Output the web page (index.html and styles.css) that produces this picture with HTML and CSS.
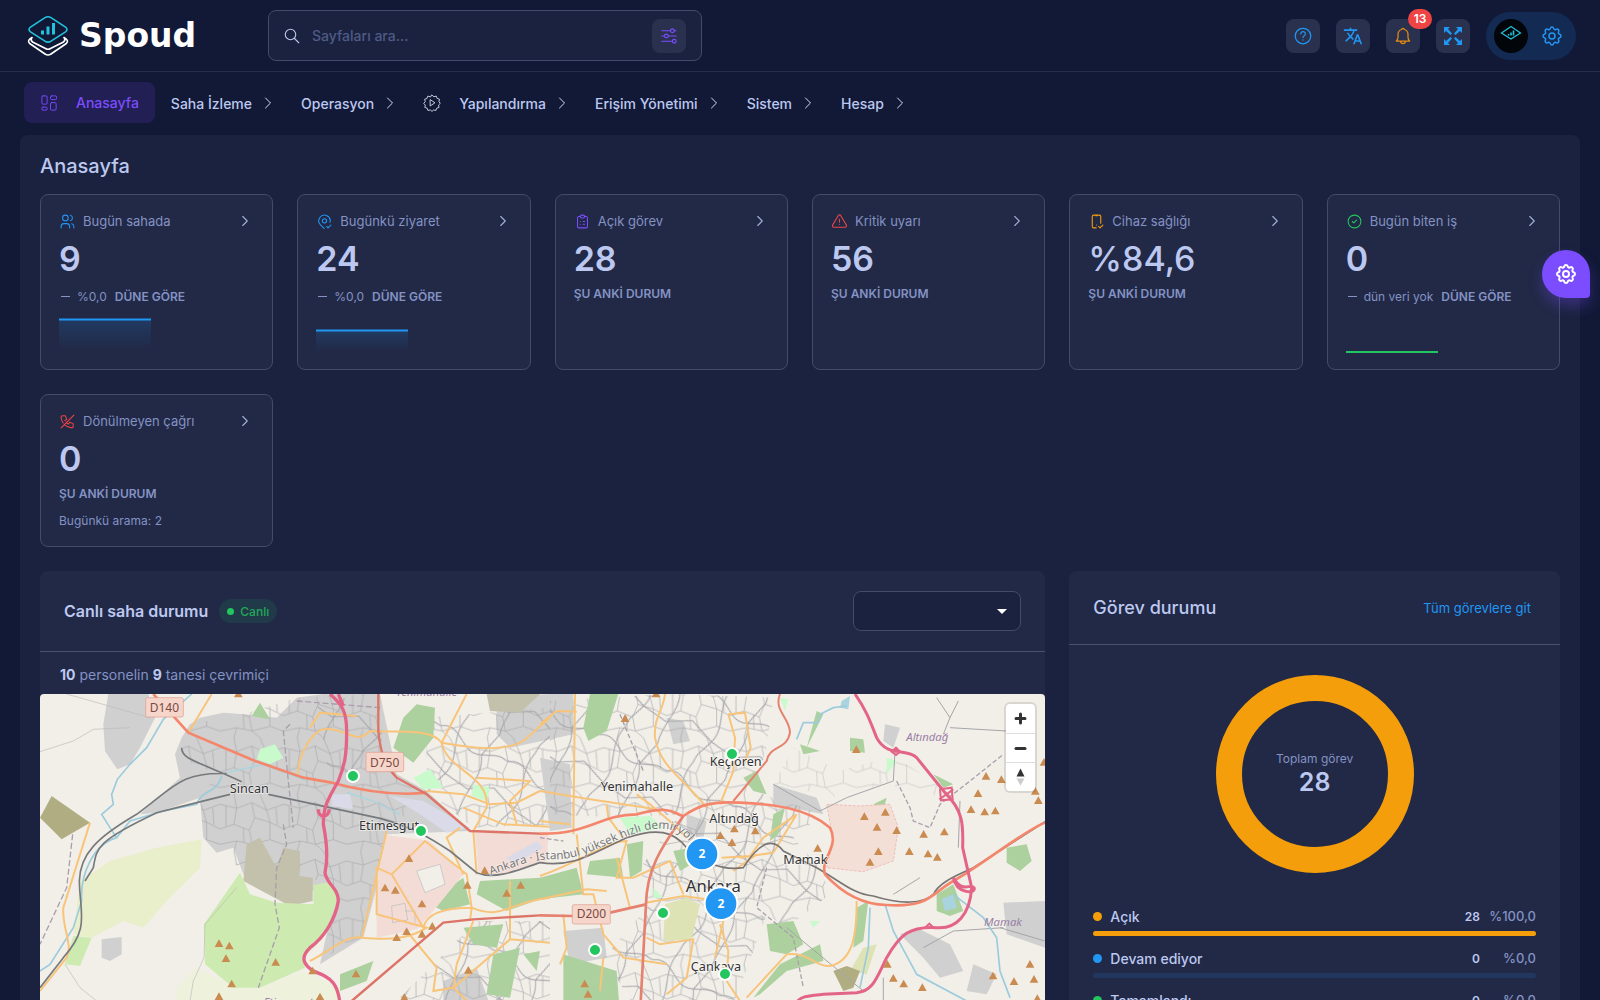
FILE: index.html
```
<!DOCTYPE html>
<html lang="tr">
<head>
	<meta charset="utf-8">
	<meta name="viewport" content="width=device-width, initial-scale=1">
	<title>Spoud - Anasayfa</title>
	<link rel="stylesheet" href="styles.css">
</head>
<body>
<svg class="defs" width="0" height="0" aria-hidden="true">
	<symbol id="chevron" viewBox="0 0 24 24"><path d="M9 6l6 6l-6 6"/></symbol>
	<symbol id="gear" viewBox="0 0 24 24">
		<path d="M10.325 4.317c.426 -1.756 2.924 -1.756 3.35 0a1.724 1.724 0 0 0 2.573 1.066c1.543 -.94 3.31 .826 2.37 2.37a1.724 1.724 0 0 0 1.065 2.572c1.756 .426 1.756 2.924 0 3.35a1.724 1.724 0 0 0 -1.066 2.573c.94 1.543 -.826 3.31 -2.37 2.37a1.724 1.724 0 0 0 -2.572 1.065c-.426 1.756 -2.924 1.756 -3.35 0a1.724 1.724 0 0 0 -2.573 -1.066c-1.543 .94 -3.31 -.826 -2.37 -2.37a1.724 1.724 0 0 0 -1.065 -2.572c-1.756 -.426 -1.756 -2.924 0 -3.35a1.724 1.724 0 0 0 1.066 -2.573c-.94 -1.543 .826 -3.31 2.37 -2.37c1 .608 2.296 .07 2.572 -1.065z"/>
		<circle cx="12" cy="12" r="3"/>
	</symbol>
</svg>

<header class="topbar">
	<a class="logo" href="#">
		<svg width="42" height="42" viewBox="0 0 42 42" fill="none" stroke-width="1.6" stroke-linejoin="round" stroke-linecap="round">
			<path stroke="#22c3dc" d="M18 2.6Q21 1 24 2.6L38.500 12.200Q41.500 14.500 38.500 16.800L24 26.200Q21 28 18 26.200L3.500 16.800Q0.500 14.500 3.500 12.200Z"/>
			<path stroke="#22c3dc" stroke-width="3" stroke-linecap="butt" d="M15.500 19.500v-4M21 19.500v-8M26.500 19.500V8"/>
			<path stroke="#fff" d="M5 22.500Q-.5 25.500 2.700 28.500L18 39Q21 41 24 39L39.300 28.500Q42.500 25.500 37 22.500M5 22.500Q3 25 5.500 27L18.500 33.500Q21 35 23.500 33.500L36.500 27Q39 25 37 22.500"/>
		</svg>
		<span>Spoud</span>
	</a>
	<form class="search">
		<svg class="line" width="18" height="18" viewBox="0 0 24 24"><circle cx="10" cy="10" r="7"/><path d="M15 15l6 6"/></svg>
		<input type="text" placeholder="Sayfaları ara..." aria-label="Sayfaları ara">
		<button type="button" class="icon-btn purple" aria-label="Filtre">
			<svg class="line" width="18" height="18" viewBox="0 0 24 24"><path d="M2.500 5H14M19 5h2.500M2.500 12H6M11 12h10.500M2.500 19H17"/><circle cx="16.500" cy="5" r="2.500"/><circle cx="8.500" cy="12" r="2.500"/><circle cx="19" cy="19" r="2.500"/></svg>
		</button>
	</form>
	<div class="actions">
		<button class="icon-btn" aria-label="Yardım">
			<svg class="line" width="20" height="20" viewBox="0 0 24 24"><circle cx="12" cy="12" r="9.300"/><path d="M9.200 9.500a2.800 2.800 0 1 1 4 2.500c-.8.4-1.200.8-1.200 1.700M12 16.600v.3"/></svg>
		</button>
		<button class="icon-btn" aria-label="Dil">
			<svg width="20" height="20" viewBox="0 0 24 24" fill="currentColor"><path d="M12.870 15.070l-2.540-2.510.03-.03c1.740-1.940 2.980-4.170 3.710-6.530H17V4h-7V2H8v2H1v1.990h11.170C11.500 7.920 10.440 9.750 9 11.350 8.070 10.320 7.300 9.190 6.690 8h-2c.73 1.630 1.730 3.170 2.980 4.560l-5.090 5.020L4 19l5-5 3.110 3.110.76-2.040zM18.500 10h-2L12 22h2l1.120-3h4.750L21 22h2l-4.500-12zm-2.620 7l1.620-4.330L19.120 17h-3.240z"/></svg>
		</button>
		<button class="icon-btn bell" aria-label="Bildirimler">
			<svg class="line" width="20" height="20" viewBox="0 0 24 24"><path d="M4 18h16c-1.600-1.300-2-2.500-2-4.500v-3.500c0-3.600-2.500-5.300-4.500-5.800a1.500 1.500 0 0 0-3 0C8.500 4.700 6 6.400 6 10v3.500c0 2-.4 3.200-2 4.500zM9 18c0 4 6 4 6 0"/></svg>
			<span class="badge">13</span>
		</button>
		<button class="icon-btn" aria-label="Tam ekran">
			<svg width="20" height="20" viewBox="0 0 20 20" fill="currentColor"><path d="M1 1h6L5 3l4 4.500L7.500 9 3 5 1 7zM19 1v6l-2-2-4.500 4L11 7.500 15 3l-2-2zM1 19v-6l2 2 4.500-4L9 12.500 5 17l2 2zM19 19h-6l2-2-4-4.500 1.500-1.500 4.500 4 2-2z"/></svg>
		</button>
		<button class="profile" aria-label="Profil">
			<span class="avatar">
				<svg width="22" height="16" viewBox="0 0 22 16" fill="none" stroke="#22c3dc"><path stroke-width="1.200" d="M11 1.500L20.500 8 11 14 1.500 8z"/><path stroke-width="1.600" d="M8.500 10.500V9M11 10.500V7.500M13.500 10.500V5.500"/></svg>
			</span>
			<svg class="line" width="24" height="24"><use href="#gear"/></svg>
		</button>
	</div>
</header>

<nav class="menu">
	<a class="active" href="#">
		<svg class="line" width="18" height="18" viewBox="0 0 24 24"><rect x="2.500" y="2.500" width="7" height="11" rx="1.500"/><rect x="14" y="2.500" width="8" height="5" rx="1.500"/><rect x="2.500" y="17.500" width="7" height="4" rx="1.500"/><rect x="14" y="11.500" width="7.500" height="10" rx="1.500"/></svg>
		Anasayfa
	</a>
	<a href="#">Saha İzleme<svg class="line arrow" width="20" height="20"><use href="#chevron"/></svg></a>
	<a href="#">Operasyon<svg class="line arrow" width="20" height="20"><use href="#chevron"/></svg></a>
	<a href="#">
		<svg class="line" width="18" height="18" viewBox="0 0 24 24"><path d="M12 1.500l2.500 2.200 3.200-.9 1.100 3.100 3.200 1.100-.7 3.200 1.700 2.300-2.300 2.300.7 3.100-3.100 1-1 3-3.200-.6-2.100 1.900-2.300-1.900-3.200.6-1-3-3.100-1 .7-3.100L1 12.500l2-2.300L2.200 7l3.200-1.100 1-3.100 3.300.9z"/><path d="M9.500 8v8l6-4z"/></svg>
		Yapılandırma<svg class="line arrow" width="20" height="20"><use href="#chevron"/></svg>
	</a>
	<a href="#">Erişim Yönetimi<svg class="line arrow" width="20" height="20"><use href="#chevron"/></svg></a>
	<a href="#">Sistem<svg class="line arrow" width="20" height="20"><use href="#chevron"/></svg></a>
	<a href="#">Hesap<svg class="line arrow" width="20" height="20"><use href="#chevron"/></svg></a>
</nav>

<main>
	<h1>Anasayfa</h1>
	<div class="grid">
		<a class="card" href="#">
			<div class="card-title blue">
				<svg class="line" width="17" height="17" viewBox="0 0 24 24"><path d="M5 7a4 4 0 1 0 8 0a4 4 0 1 0 -8 0M3 21v-2a4 4 0 0 1 4 -4h4a4 4 0 0 1 4 4v2M16 3.130a4 4 0 0 1 0 7.750M21 21v-2a4 4 0 0 0 -3 -3.850"/></svg>
				<span>Bugün sahada</span>
				<svg class="line go" width="18" height="18"><use href="#chevron"/></svg>
			</div>
			<div class="value">9</div>
			<div class="trend"><i></i><span>%0,0</span><b>DÜNE GÖRE</b></div>
			<svg class="spark blue" width="92" height="36"><rect y="3" width="92" height="30" fill="url(#fade)"/><path d="M0 2.500H92"/></svg>
		</a>
		<a class="card" href="#">
			<div class="card-title blue">
				<svg class="line" width="17" height="17" viewBox="0 0 24 24"><path d="M9 11a3 3 0 1 0 6 0a3 3 0 0 0 -6 0M11.870 21.480a1.992 1.992 0 0 1 -1.283 -.58l-4.244 -4.243a8 8 0 1 1 13.355 -3.474M15 19l2 2l4 -4"/></svg>
				<span>Bugünkü ziyaret</span>
				<svg class="line go" width="18" height="18"><use href="#chevron"/></svg>
			</div>
			<div class="value">24</div>
			<div class="trend"><i></i><span>%0,0</span><b>DÜNE GÖRE</b></div>
			<svg class="spark blue" width="92" height="36">
				<defs><linearGradient id="fade" x1="0" y1="0" x2="0" y2="1"><stop offset="0" stop-color="#2196f3" stop-opacity=".16"/><stop offset="1" stop-color="#2196f3" stop-opacity="0"/></linearGradient></defs>
				<rect y="14" width="92" height="20" fill="url(#fade)"/><path d="M0 13.500H92"/>
			</svg>
		</a>
		<a class="card" href="#">
			<div class="card-title purple">
				<svg class="line" width="17" height="17" viewBox="0 0 24 24"><path d="M9 5h-2a2 2 0 0 0 -2 2v12a2 2 0 0 0 2 2h10a2 2 0 0 0 2 -2v-12a2 2 0 0 0 -2 -2h-2M9 5a2 2 0 0 1 2 -2h2a2 2 0 0 1 2 2a2 2 0 0 1 -2 2h-2a2 2 0 0 1 -2 -2zM9 12h.01M13 12h2M9 16h.01M13 16h2"/></svg>
				<span>Açık görev</span>
				<svg class="line go" width="18" height="18"><use href="#chevron"/></svg>
			</div>
			<div class="value">28</div>
			<div class="state">ŞU ANKİ DURUM</div>
		</a>
		<a class="card" href="#">
			<div class="card-title red">
				<svg class="line" width="17" height="17" viewBox="0 0 24 24"><path d="M12 9v4M10.363 3.591l-8.106 13.534a1.914 1.914 0 0 0 1.636 2.871h16.214a1.914 1.914 0 0 0 1.636 -2.870l-8.106 -13.536a1.914 1.914 0 0 0 -3.274 0zM12 16h.01"/></svg>
				<span>Kritik uyarı</span>
				<svg class="line go" width="18" height="18"><use href="#chevron"/></svg>
			</div>
			<div class="value">56</div>
			<div class="state">ŞU ANKİ DURUM</div>
		</a>
		<a class="card" href="#">
			<div class="card-title orange">
				<svg class="line" width="17" height="17" viewBox="0 0 24 24"><path d="M11.500 21h-3.500a2 2 0 0 1 -2 -2v-14a2 2 0 0 1 2 -2h8a2 2 0 0 1 2 2v9.500M11 4h2M15 19l2 2l4 -4M12 17v.01"/></svg>
				<span>Cihaz sağlığı</span>
				<svg class="line go" width="18" height="18"><use href="#chevron"/></svg>
			</div>
			<div class="value percent">%84,6</div>
			<div class="state">ŞU ANKİ DURUM</div>
		</a>
		<a class="card" href="#">
			<div class="card-title green">
				<svg class="line" width="17" height="17" viewBox="0 0 24 24"><path d="M3 12a9 9 0 1 0 18 0a9 9 0 1 0 -18 0M9 12l2 2l4 -4"/></svg>
				<span>Bugün biten iş</span>
				<svg class="line go" width="18" height="18"><use href="#chevron"/></svg>
			</div>
			<div class="value">0</div>
			<div class="trend"><i></i><span>dün veri yok</span><b>DÜNE GÖRE</b></div>
			<svg class="spark green" width="92" height="36"><path d="M0 35H92"/></svg>
		</a>
		<a class="card" href="#">
			<div class="card-title red">
				<svg class="line" width="17" height="17" viewBox="0 0 24 24"><path d="M3 21l18 -18M5.831 14.161a15.946 15.946 0 0 1 -2.831 -8.161a2 2 0 0 1 2 -2h4l2 5l-2.500 1.500c.108 .22 .223 .435 .345 .645m1.751 2.277c.843 .84 1.822 1.544 2.904 2.078l1.500 -2.500l5 2v4a2 2 0 0 1 -2 2a15.963 15.963 0 0 1 -10.344 -4.657"/></svg>
				<span>Dönülmeyen çağrı</span>
				<svg class="line go" width="18" height="18"><use href="#chevron"/></svg>
			</div>
			<div class="value">0</div>
			<div class="state">ŞU ANKİ DURUM</div>
			<div class="note">Bugünkü arama: 2</div>
		</a>

		<section class="panel live">
			<div class="live-head">
				<h2>Canlı saha durumu</h2>
				<span class="chip">Canlı</span>
				<select aria-label="Filtre"><option></option></select>
			</div>
			<p class="summary"><b>10</b> personelin <b>9</b> tanesi çevrimiçi</p>
			<div class="map">
				<svg class="map-svg" viewBox="30 39 3016 960" preserveAspectRatio="xMidYMin slice">
					<defs>
						<pattern id="streets" width="190" height="170" patternUnits="userSpaceOnUse">
							<path fill="none" stroke="#a9a9ac" stroke-width="2" d="M0 30L50 42 95 25 140 48 190 30M50 42L42 90 0 104M42 90L88 108 104 70 95 25M104 70L150 84 140 48M150 84L190 104M88 108L96 150 50 140 0 150M96 150L150 136 150 84M150 136L190 150M50 140L42 170M42 0L50 42M120 170L96 150M120 0L140 48M18 35V98M70 102L72 145M168 40L172 92"/>
						</pattern>
						<pattern id="avenues" width="230" height="260" patternUnits="userSpaceOnUse" patternTransform="rotate(28)">
							<path fill="none" stroke="#a3a3a8" stroke-width="3" d="M0 60C60 20 90 110 150 80S200 60 230 60M60 0C40 80 100 120 80 180S60 220 60 260M150 80C190 140 150 200 170 260M170 0L150 80M80 180L160 190 230 150M0 150L80 180"/>
						</pattern>
						<path id="peak" d="M-13 10L0 -13 13 10z"/>
						<path id="railname" d="M1382 582C1450 560 1500 535 1570 535C1650 540 1740 480 1840 449C1930 430 1960 460 1985 490"/>
					</defs>
					<rect x="30" y="39" width="3016" height="1260" fill="#f2efe9"/>

					<!-- batı -->
					<g fill="#d0d0d0">
						<path d="M235 39H355L375 110 330 200 300 250 262 265 225 210 220 130z"/>
						<path d="M480 130L510 110 580 95 640 100 740 110 800 50 880 39H1050L1100 280 1190 330 1320 450 1070 460 1045 600 1000 770 870 850 905 690 830 610 640 580 610 500 560 515 520 470 510 350 380 395 330 400 450 290 435 220 455 170z"/>
						<path d="M215 775L275 768 275 820 240 840 215 830zM1400 50L1560 39 1630 60V160L1440 200 1400 160zM1240 900L1340 860 1390 1000H1240z"/>
					</g>
					<path fill="url(#streets)" d="M480 130L640 100 800 50 1050 39 1060 270 1190 330 1070 460 1000 770 900 820 880 600 640 570 520 470 510 350 560 280 450 230z"/>
					<path fill="url(#streets)" d="M1190 110L1560 80V430L1330 440 1190 330zM1340 720L1560 720V1000H1060z"/>
					<path fill="url(#avenues)" d="M1190 110L1560 80V430L1330 440 1190 330zM1340 720L1560 720V1000H1060zM860 60L1050 39 1060 270 900 300z"/>
					<g fill="#c3c0ab"><path d="M650 490L690 470 740 560 760 500 810 510 808 585 848 590V660L780 675 640 600z"/><path fill="#b1ad83" d="M65 345L180 425 95 475 30 410z"/><path d="M1370 39L1530 39 1470 95 1380 90z"/></g>
					<path fill="#e9efcb" d="M240 540L380 500 515 475 510 560 410 660 340 740 280 720 185 770 130 760 150 600z"/>
					<path fill="#eef2dc" d="M500 860L620 920 690 920 820 870 930 920V1000H430L440 920z"/>
					<path fill="#cdebb0" d="M630 575L660 640 740 665 850 670V612L905 602 925 650 880 770 820 830 825 860 690 920 610 920 525 850 522 730zM130 765L185 770 150 855 105 850z"/>
					<g fill="#add19e">
						<path d="M1120 110L1160 70 1215 80 1210 170 1150 245 1090 200zM665 105L690 65 720 115zM1190 665L1300 590 1320 670 1240 690zM1350 600L1530 590V655L1430 690 1340 640zM930 880L1030 840 1010 900 930 930zM1300 740L1420 730 1400 800 1330 790zM1390 820L1470 800 1440 950 1370 940zM1480 820L1530 810 1520 870z"/>
					</g>
					<path fill="#c8facc" d="M690 205L735 190 760 230 720 250 680 235zM1150 290L1200 265 1240 320 1180 325zM1330 310L1380 320 1370 360 1325 345z"/>
					<path fill="#f3dcd5" d="M1070 462L1200 480 1300 580 1210 690 1160 745 1040 770V590zM1335 455H1556L1550 540 1400 585 1345 570z"/>
					<path fill="#dadae8" d="M1080 345L1180 360 1320 440 1250 455 1170 400zM905 340L960 340 970 385 905 375zM1430 530L1520 480 1540 500 1450 550z"/>
					<path fill="#f2efe9" stroke="#bbb" stroke-width="2" d="M1160 570L1230 550 1245 610 1185 635z"/>
					<path fill="none" stroke="#bbb" stroke-width="2" d="M1085 675l40-8 8 50-45 8zM1125 690l30 0v35M110 39L360 110M30 212L130 180 190 145 300 140M620 620L525 730 522 830 490 900 480 960M105 850L150 920 200 960"/>
					<path fill="none" stroke="#9bcbdc" stroke-width="5" d="M485 39L400 115 350 200 300 250 262 295 245 340 250 370 215 400 240 440 260 470C190 490 150 580 155 660L130 740 60 850 30 870M575 285C560 340 520 320 500 370L400 390 300 420 260 470"/>
					<path fill="none" stroke="#a8d5e2" stroke-width="4" d="M590 275L700 250 830 300M950 335L1030 360 1110 400"/>
					<path fill="none" stroke="#a99fab" stroke-width="4" stroke-dasharray="18 8" d="M780 130L760 150 775 300 790 440M760 430L770 490 740 560 735 670 748 740 685 920M128 460L110 620 30 790M800 60L1050 80"/>
					<g fill="none" stroke="#f7c47a" stroke-width="6">
						<path d="M545 39L475 155M805 280C800 230 850 130 900 145C960 150 980 190 1020 150C1100 155 1200 140 1235 185C1320 200 1420 215 1480 180L1560 110M1310 39L1235 185C1250 270 1380 280 1370 380L1330 450M180 425L100 680C95 740 130 790 110 830L30 930M1070 450L1040 580 995 770C950 760 900 810 840 840M995 770C1060 775 1130 780 1190 740L1040 700V560L1085 580 1185 480 1310 580 1325 680 1320 720M1085 580L1180 740C1190 690 1260 680 1325 680C1420 720 1440 660 1560 650M1330 450L1340 580M1130 750L1220 860 1210 930 1270 920 1350 1000M1330 720L1280 850 1270 920M1440 600V775L1270 920M840 140L870 95 980 105M1190 330L1300 340 1380 370 1460 365 1530 330M1290 440L1250 470 1300 580M1340 290L1500 300 1440 360 1460 430M1300 380L1420 430 1560 437M1440 775L1560 785"/>
					</g>
					<path fill="none" stroke="#777a7c" stroke-width="5" d="M455 200C455 235 500 240 635 302M715 340L1050 412C1150 440 1200 470 1260 510L1340 575C1400 600 1480 560 1530 545M590 278C450 272 430 320 320 400C200 470 150 520 148 600C150 700 180 740 100 830L30 920M600 340L440 380 380 395C200 480 200 500 190 560L165 600"/>
					<g fill="none" stroke="#f4866c" stroke-width="8">
						<path d="M370 39L475 155 670 238 820 290 905 305C1000 330 1100 345 1190 335"/>
						<path stroke="#dd7468" stroke-width="7" d="M1045 39V150C1050 220 1070 260 1100 290L1190 340 1320 450 1530 458M965 960L1240 725 1330 715 1530 703"/>
					</g>
					<path fill="none" stroke="#e46487" stroke-width="10" d="M900 39C935 70 950 90 950 150C950 220 945 250 925 300C890 360 880 380 880 430C890 480 895 530 885 575C890 610 925 620 925 660C915 720 880 770 840 800C810 830 820 850 850 870C900 890 930 900 932 1000M925 39L940 75M866 385C862 412 898 412 897 385"/>
					<g fill="#c98b50">
						<use href="#peak" x="625" y="39"/><use href="#peak" x="567" y="788"/><use href="#peak" x="598" y="795"/><use href="#peak" x="588" y="833"/><use href="#peak" x="737" y="844"/><use href="#peak" x="605" y="909"/><use href="#peak" x="567" y="947"/><use href="#peak" x="870" y="948"/><use href="#peak" x="848" y="870"/><use href="#peak" x="978" y="879"/><use href="#peak" x="1137" y="533"/><use href="#peak" x="1065" y="621"/><use href="#peak" x="1096" y="628"/><use href="#peak" x="1176" y="669"/><use href="#peak" x="1130" y="752"/><use href="#peak" x="1100" y="770"/><use href="#peak" x="1176" y="760"/><use href="#peak" x="1207" y="736"/><use href="#peak" x="1312" y="613"/><use href="#peak" x="1364" y="569"/><use href="#peak" x="1430" y="637"/><use href="#peak" x="1472" y="613"/><use href="#peak" x="1315" y="868"/><use href="#peak" x="1123" y="950"/>
					</g>

					<!-- doğu -->
					<g transform="translate(1530 0)">
						<path fill="#d0d0d0" d="M30 39H100V140L30 180zM0 230L90 250 95 440 30 450zM380 110L430 120 450 180 400 190zM700 310L830 350 850 400 700 370zM1035 130L1080 140 1060 200 1030 180zM1080 760L1130 740 1230 790 1270 870 1200 890 1150 830zM1390 665L1515 660V800L1400 760zM1300 850L1370 880 1340 940 1280 930zM70 750L190 740 200 830 90 850zM440 400L500 420 490 470 440 460z"/>
						<path fill="url(#streets)" d="M30 60L380 39 700 50 680 200 640 330 850 400 760 470 840 560 870 640 740 740 680 700 570 1000H300L190 830 330 670 300 560 420 400 250 410 30 400z"/>
						<path fill="url(#avenues)" d="M30 60L380 39 700 50 680 200 640 330 850 400 760 470 840 560 870 640 740 740 680 700 570 1000H300L190 830 330 670 300 560 420 400 250 410 30 400z"/>
						<path fill="url(#streets)" opacity=".6" d="M760 200L900 270 1040 230 1100 250 1210 320 1150 370 1080 360 1060 300 900 350 700 310z"/>
						<g fill="#add19e">
							<path d="M150 39H235L200 150 145 180 130 140zM930 170L970 175 975 215 930 210zM610 290L650 270 680 340 640 330zM700 400L735 380 715 460 690 480zM0 590L110 560 130 640 0 655zM260 490L310 480 305 570 270 590zM150 540L240 530 250 590 140 580zM400 510L450 500 470 540 420 570zM1400 500L1460 490 1475 540 1440 570 1400 545zM1190 640L1240 610 1270 690 1230 705 1190 690zM70 820L230 870 240 1000H70zM680 730L760 720 790 790 740 820 690 810zM720 850L840 790 850 840 740 870 660 940 640 950zM950 680L985 660 970 780 940 800zM780 190L840 210 790 220zM900 400L940 390 930 410zM1180 280L1240 310 1210 320zM830 90L850 100 800 200zM1000 370L1040 350 1030 390z"/>
						</g>
						<path fill="#dde3b4" d="M375 670L440 650 480 670 455 775 370 780zM970 800L1010 790 980 880 930 870z"/>
						<path fill="#c8facc" d="M720 50L745 55 735 90zM240 410L330 405 370 440 270 460zM1040 230L1070 240 1040 280zM340 620L370 650 340 650zM810 720L840 720 820 740z"/>
						<path fill="#a9d3de" d="M905 60L930 45 925 85 900 80zM1205 655L1240 640 1250 680 1215 690z"/>
						<path fill="#b1ad83" d="M880 870L920 855 960 870 940 920 910 930z"/>
						<path fill="#f4dfd7" stroke="#f0bfb9" stroke-width="3" stroke-dasharray="9 4" d="M860 370L960 375 1050 370 1075 440 1060 540 970 572 860 560 880 480z"/>
						<path fill="none" stroke="#a5a5a8" stroke-width="3" d="M1190 50L1230 110 1255 60M1230 110L1210 160M1230 140L1400 150 1440 190M1065 210L1060 300 920 350 840 390 700 310M1260 360L1255 500M1140 590L1060 640M1515 780L1380 740M1030 890L1030 960M1150 800L1240 750 1390 740M740 740L800 790 970 930"/>
						<path fill="none" stroke="#a99fab" stroke-width="4" stroke-dasharray="14 7" d="M1070 300L1110 380 1120 420 1170 440 1200 370 1290 300 1390 220M680 560L650 680 760 770 790 920M240 100L310 270M0 470L70 480"/>
						<path fill="none" stroke="#9bcbdc" stroke-width="5" d="M920 75L880 80 840 100 835 125 790 125 770 175M1035 670L1060 750 1130 880 1280 960M1240 640L1330 710 1370 770 1380 870 1410 950M990 680L985 800 960 920"/>
						<g fill="none" stroke="#f7c47a" stroke-width="6">
							<path d="M105 39L100 460M0 330L150 355 350 385M375 39C370 90 340 110 345 170C360 260 430 290 500 380M565 100L615 95 632 200 615 240M565 100L585 170 580 270 540 370M200 370L205 410 250 470M290 340L330 370 400 430 440 470M110 460L130 640 160 640 190 760 250 830 380 850M0 585C130 540 200 480 260 480L230 590 280 590 390 540 430 640M230 530L270 680M318 665L430 645 500 655M320 770L360 790 460 775 440 890 380 940M540 730L565 810 560 900M550 720L525 830M620 950L740 820C800 810 830 860 870 855C940 840 950 760 950 660M600 530L700 515 770 400M0 655L140 625 200 630M70 700L80 800 60 850M545 530L630 525 670 470 770 400M580 570L650 520M0 420L90 430M0 130L50 90 110 92M600 960L560 900M180 930L190 830"/>
						</g>
						<path fill="none" stroke="#7a7575" stroke-width="5" d="M0 545C100 560 150 520 260 470C350 440 400 450 440 500C520 570 580 565 610 560C660 480 700 470 730 510L830 560C900 600 940 640 1000 645C1080 670 1150 670 1180 640C1200 600 1260 580 1300 560L1515 422"/>
						<g fill="none" stroke="#f4866c" stroke-width="8">
							<path d="M0 458C150 460 180 400 290 400C400 370 400 400 430 405C480 370 520 360 600 365C700 370 800 380 870 440C900 500 840 530 855 580C900 630 960 670 1040 672C1170 680 1170 640 1240 600C1330 550 1450 450 1515 425"/>
							<path stroke="#e5816e" d="M430 405C380 480 320 550 318 670L300 1000M0 703L100 705M210 695L318 670"/>
							<path stroke-width="6" stroke="#e5816e" d="M720 39C700 90 750 110 750 155C740 210 690 190 680 240L580 360"/>
						</g>
						<path fill="none" stroke="#e46487" stroke-width="9" d="M945 39C980 90 990 120 1010 170C1040 230 1100 200 1130 230L1215 335C1270 390 1270 430 1268 500L1295 620C1290 700 1250 745 1190 740C1110 735 1080 760 1040 830C1010 890 1000 930 950 935L850 940C800 945 780 945 765 970M1240 590C1250 640 1310 640 1302 620C1290 605 1270 640 1240 590"/>
						<path fill="none" stroke="#e46487" stroke-width="6" d="M1200 325L1235 320 1238 355 1203 358zM1198 355L1240 325M1055 212L1068 200 1080 212 1068 222zM1155 740l13-12 13 12"/>
						<g fill="#c98b50">
							<use href="#peak" x="255" y="113"/><use href="#peak" x="348" y="39"/><use href="#peak" x="949" y="206"/><use href="#peak" x="541" y="464"/><use href="#peak" x="583" y="444"/><use href="#peak" x="646" y="450"/><use href="#peak" x="576" y="485"/><use href="#peak" x="833" y="502"/><use href="#peak" x="973" y="407"/><use href="#peak" x="1036" y="394"/><use href="#peak" x="1011" y="439"/><use href="#peak" x="1070" y="449"/><use href="#peak" x="1015" y="512"/><use href="#peak" x="990" y="544"/><use href="#peak" x="1151" y="460"/><use href="#peak" x="1213" y="453"/><use href="#peak" x="1108" y="512"/><use href="#peak" x="1164" y="519"/><use href="#peak" x="1192" y="529"/><use href="#peak" x="1314" y="338"/><use href="#peak" x="1338" y="286"/><use href="#peak" x="1384" y="296"/><use href="#peak" x="1293" y="386"/><use href="#peak" x="1334" y="393"/><use href="#peak" x="1366" y="390"/><use href="#peak" x="1486" y="331"/><use href="#peak" x="1495" y="359"/><use href="#peak" x="1512" y="244"/><use href="#peak" x="134" y="909"/><use href="#peak" x="144" y="940"/><use href="#peak" x="1042" y="850"/><use href="#peak" x="1060" y="892"/><use href="#peak" x="1091" y="909"/><use href="#peak" x="1147" y="920"/><use href="#peak" x="1359" y="885"/><use href="#peak" x="1422" y="902"/><use href="#peak" x="1470" y="850"/><use href="#peak" x="1482" y="895"/><use href="#peak" x="1492" y="953"/>
						</g>
					</g>

					<g class="road-no">
						<rect x="347" y="50" width="113" height="58" rx="5"/><text x="403" y="93">D140</text>
						<rect x="1008" y="214" width="113" height="58" rx="5"/><text x="1064" y="257">D750</text>
						<rect x="1627" y="671" width="114" height="58" rx="5"/><text x="1684" y="712">D200</text>
					</g>
					<text class="rail"><textPath href="#railname">Ankara · İstanbul yüksek hızlı demiryolu</textPath></text>
					<g class="place">
						<text x="658" y="335">Sincan</text>
						<text x="1077" y="446">Etimesgut</text>
						<text x="2117" y="255">Keçiören</text>
						<text x="1821" y="331">Yenimahalle</text>
						<text x="2112" y="426">Altındağ</text>
						<text x="2326" y="549">Mamak</text>
						<text x="2058" y="869">Çankaya</text>
						<text class="city" x="2050" y="634">Ankara</text>
					</g>
					<g class="district">
						<text x="2692" y="180">Altındağ</text>
						<text x="2919" y="735">Mamak</text>
						<text x="1190" y="45">Yenimahalle</text>
						<text x="775" y="975">Etimesgut</text>
					</g>
					<g class="person">
						<circle cx="969" cy="285" r="18"/><circle cx="1173" cy="450" r="18"/><circle cx="2106" cy="219" r="18"/><circle cx="1899" cy="696" r="18"/><circle cx="1695" cy="807" r="18"/><circle cx="2085" cy="879" r="18"/>
					</g>
					<g class="cluster">
						<circle cx="2016" cy="519" r="49"/><text x="2016" y="531">2</text>
						<circle cx="2073" cy="668" r="49"/><text x="2073" y="680">2</text>
					</g>
				</svg>
				<div class="map-ctrl">
					<button aria-label="Yakınlaştır"><svg width="29" height="29" viewBox="0 0 29 29"><path d="M14.500 10v9M10 14.500h9"/></svg></button>
					<button aria-label="Uzaklaştır"><svg width="29" height="29" viewBox="0 0 29 29"><path d="M10 14.500h9"/></svg></button>
					<button aria-label="Kuzey"><svg class="compass" width="29" height="29" viewBox="0 0 29 29"><path fill="#333" d="M10.500 13.500l4-8 4 8z"/><path fill="#ccc" d="M10.500 15.500l4 7 4-7z"/></svg></button>
				</div>
			</div>
		</section>

		<section class="panel tasks">
			<div class="tasks-head">
				<h2>Görev durumu</h2>
				<a href="#">Tüm görevlere git</a>
			</div>
			<div class="tasks-body">
				<div class="donut">
					<span>Toplam görev</span>
					<b>28</b>
				</div>
				<ul>
					<li class="orange">
						<div class="row"><i></i><span>Açık</span><b>28</b><small>%100,0</small></div>
						<div class="bar"><div style="width:100%"></div></div>
					</li>
					<li class="blue">
						<div class="row"><i></i><span>Devam ediyor</span><b>0</b><small>%0,0</small></div>
						<div class="bar"><div style="width:0%"></div></div>
					</li>
					<li class="green">
						<div class="row"><i></i><span>Tamamlandı</span><b>0</b><small>%0,0</small></div>
						<div class="bar"><div style="width:0%"></div></div>
					</li>
				</ul>
			</div>
		</section>
	</div>
</main>

<button class="fab" aria-label="Ayarlar"><svg class="line" width="24" height="24"><use href="#gear"/></svg></button>
</body>
</html>
```
FILE: styles.css
```
*{
	box-sizing: border-box;
}
body{
	margin:0;
	background-color: #111936;
	color:#bdc8f0;
	font-family: Inter, "Noto Sans", sans-serif;
	font-size: 14px;
}
a{
	color:inherit;
	text-decoration: none;
}
button{
	cursor: pointer;
	border:none;
	padding:0;
	font-family: inherit;
}
h1,h2,p,ul{
	margin:0;
	padding:0;
	font-weight: 500;
}
svg{
	display: block;
	flex:none;
}
.defs{
	position: absolute;
}
.line{
	fill:none;
	stroke:currentColor;
	stroke-width: 1.5;
	stroke-linecap: round;
	stroke-linejoin: round;
}
.blue{
	color:#2196f3;
}
.purple{
	color:#7c4dff;
}
.red{
	color:#ef4444;
}
.orange{
	color:#f59e0b;
}
.green{
	color:#22c55e;
}

/*顶部*/
.topbar{
	display: flex;
	align-items: center;
	height: 72px;
	padding:0 24px;
	border-bottom: 1px solid #262e4c;
}
.logo{
	display: flex;
	align-items: center;
	gap:10px;
	width: 244px;
	padding-left: 3px;
	color:#fff;
	font-family: "DejaVu Sans", sans-serif;
	font-weight: bold;
	font-size: 33px;
	line-height: 40px;
}
.search{
	display: flex;
	align-items: center;
	width: 434px;
	height: 51px;
	padding:0 15px 0 14px;
	border:1px solid #434b6a;
	border-radius: 8px;
	background-color: #1a223f;
}
.search input{
	flex:1;
	min-width: 0;
	padding:0 11px;
	border:none;
	outline: none;
	background: none;
	color:#bdc8f0;
	font-family: inherit;
	font-size: 14px;
	font-weight: 500;
}
.search input::placeholder{
	color:#4f5a86;
}
.icon-btn{
	position: relative;
	display: flex;
	align-items: center;
	justify-content: center;
	width: 34px;
	height: 34px;
	border-radius: 8px;
	background-color: #29314f;
	color:#2196f3;
}
.search .purple{
	color:#7c4dff;
}
.actions{
	display: flex;
	align-items: center;
	gap:16px;
	margin-left: auto;
}
.bell{
	color:#e58a12;
}
.badge{
	position: absolute;
	top:-10px;
	right:-12px;
	min-width: 24px;
	border-radius: 10px;
	background-color: #ef4444;
	color:#fff;
	font-size: 12px;
	font-weight: 600;
	line-height: 20px;
}
.profile{
	display: flex;
	align-items: center;
	gap:12px;
	height: 48px;
	padding:0 12px 0 8px;
	border-radius: 24px;
	background-color: #132a52;
	color:#2196f3;
}
.avatar{
	display: flex;
	justify-content: center;
	width: 34px;
	height: 34px;
	padding-top: 6px;
	border-radius: 50%;
	background-color: #020509;
}

/*菜单*/
.menu{
	display: flex;
	padding:10px 24px 12px;
}
.menu a{
	display: flex;
	align-items: center;
	height: 41px;
	padding:1px 7px 0 16px;
	font-weight: 500;
}
.menu .line{
	margin-right: 18px;
	stroke-width: 1.2;
	color:#d7dcec;
}
.menu .arrow{
	margin:0 0 0 6px;
}
.menu .active{
	padding:0 16px;
	border-radius: 8px;
	background-color: #211f54;
	color:#7c4dff;
}
.menu .active .line{
	color:#7c4dff;
}

/*内容*/
main{
	margin:0 20px;
	padding:19px 20px 20px;
	border-radius: 8px 8px 0 0;
	background-color: #1a223f;
}
h1{
	margin-bottom: 16px;
	font-size: 20px;
	line-height: 24px;
}
.grid{
	display: grid;
	grid-template-columns: repeat(6, minmax(0, 1fr));
	gap:24px;
}
.card{
	padding:17px 18px 16px;
	border:1px solid #434b68;
	border-radius: 8px;
	background-color: #212946;
}
.card-title{
	display: flex;
	align-items: center;
	gap:7px;
	height: 18px;
}
.card-title span{
	flex:1;
	color:#8492c4;
	font-size: 13px;
}
.go{
	color:#a3aed8;
}
.value{
	margin-top: 9px;
	font-size: 34px;
	font-weight: 600;
	line-height: 40px;
}
.percent{
	font-weight: 500;
}
.trend{
	display: flex;
	align-items: center;
	margin-top: 8px;
	height: 18px;
	color:#8492c4;
	font-size: 12px;
}
.trend i{
	width: 9px;
	height: 1px;
	margin:0 7px 0 2px;
	background-color: #8492c4;
}
.trend b,
.state{
	color:#8492c4;
	font-size: 12px;
	font-weight: 600;
}
.trend b{
	margin-left: 8px;
}
.state{
	margin-top: 8px;
	line-height: 14px;
}
.note{
	margin-top: 10px;
	color:#8492c4;
	font-size: 12px;
	line-height: 19px;
}
.spark{
	margin-top: 12px;
	stroke-width: 2;
}
.spark path{
	stroke:currentColor;
}
.panel{
	overflow: hidden;
	border-radius: 8px;
	background-color: #212946;
}
.live{
	grid-column: 1 / span 4;
}
.live-head{
	display: flex;
	align-items: center;
	padding:20px 24px;
	border-bottom: 1px solid #4a5270;
}
.live h2{
	font-size: 16px;
	font-weight: 600;
}
.chip{
	display: flex;
	align-items: center;
	gap:6px;
	height: 24px;
	margin-left: 11px;
	padding:0 8px;
	border-radius: 12px;
	background-color: #213a4a;
	color:#22a855;
	font-size: 12px;
	font-weight: 500;
}
.chip::before{
	content:"";
	width: 7px;
	height: 7px;
	border-radius: 50%;
	background-color: #22c55e;
}
select{
	width: 168px;
	height: 40px;
	margin-left: auto;
	border:1px solid #434b68;
	border-radius: 8px;
	appearance: none;
	background: #1a223f url("data:image/svg+xml,%3Csvg xmlns='http://www.w3.org/2000/svg' width='10' height='5'%3E%3Cpath fill='%23fff' d='M0 0h10L5 5z'/%3E%3C/svg%3E") no-repeat right 13px center;
}
.summary{
	padding:13px 20px 9px;
	color:#8492c4;
	font-weight: 400;
	line-height: 20px;
}
.summary b{
	color:#bdc8f0;
	font-weight: 700;
}
.map{
	position: relative;
	overflow: hidden;
	height: 320px;
	border-radius: 4px;
}
.map-svg{
	width: 100%;
	height: 100%;
	font-family: "Noto Sans", "Open Sans", sans-serif;
}
.map-svg text{
	text-anchor: middle;
}
.road-no rect{
	fill:#f6d6cb;
	stroke:#dd9a8b;
	stroke-width: 2;
}
.road-no text{
	fill:#7a4a42;
	font-size: 36px;
}
.place text{
	fill:#333;
	font-size: 38px;
	stroke:#fff;
	stroke-opacity: .6;
	stroke-width: 5;
	paint-order: stroke;
}
.place .city{
	font-size: 50px;
}
.district text{
	fill:#9a80a6;
	font-size: 34px;
	font-style: italic;
}
.map-svg .rail{
	fill:#777;
	font-size: 35px;
	text-anchor: start;
	stroke:#fff;
	stroke-opacity: .5;
	stroke-width: 4;
	paint-order: stroke;
}
.person circle{
	fill:#22c55e;
	stroke:#fff;
	stroke-width: 6;
}
.cluster circle{
	fill:#2196f3;
	stroke:#fff;
	stroke-width: 6;
}
.cluster text{
	fill:#fff;
	font-size: 36px;
	font-weight: bold;
}
.map-ctrl{
	position: absolute;
	top:10px;
	right:10px;
	overflow: hidden;
	border-radius: 4px;
	background-color: #fff;
	box-shadow: 0 0 0 2px rgba(0,0,0,.1);
}
.map-ctrl button{
	display: block;
	width: 29px;
	height: 29px;
	background: none;
}
.map-ctrl button + button{
	border-top: 1px solid #ddd;
}
.map-ctrl svg{
	stroke:#333;
	stroke-width: 3;
	stroke-linecap: round;
}
.map-ctrl .compass{
	stroke:none;
}
.tasks{
	grid-column: span 2;
}
.tasks-head{
	display: flex;
	align-items: center;
	justify-content: space-between;
	height: 74px;
	padding:0 29px 0 24px;
	border-bottom: 1px solid #4a5270;
}
.tasks h2{
	font-size: 18px;
}
.tasks-head a{
	color:#2196f3;
	font-size: 13px;
}
.tasks-body{
	padding:30px 24px 24px;
}
.donut{
	display: flex;
	flex-direction: column;
	align-items: center;
	justify-content: center;
	width: 198px;
	height: 198px;
	margin:0 auto 33px;
	border:26px solid #f59e0b;
	border-radius: 50%;
}
.donut span{
	color:#8492c4;
	font-size: 12px;
	line-height: 16px;
}
.donut b{
	font-size: 25px;
	font-weight: 600;
	line-height: 30px;
}
ul{
	list-style: none;
}
li{
	margin-bottom: 12px;
}
.row{
	display: flex;
	align-items: center;
	height: 20px;
	margin-bottom: 5px;
}
.row i{
	width: 9px;
	height: 9px;
	margin-right: 8px;
	border-radius: 50%;
	background-color: currentColor;
}
.row span{
	flex:1;
	color:#bdc8f0;
}
.row b{
	color:#bdc8f0;
	font-size: 12px;
	font-weight: 600;
}
.row small{
	width: 56px;
	color:#8492c4;
	font-size: 13px;
	text-align: right;
}
.bar{
	height: 5px;
	border-radius: 3px;
	background-color: #22375f;
	overflow: hidden;
}
.bar div{
	height: 5px;
	background-color: currentColor;
}

/*右侧悬浮按钮*/
.fab{
	position: fixed;
	top:250px;
	right:10px;
	display: flex;
	align-items: center;
	justify-content: center;
	width: 48px;
	height: 48px;
	border-radius: 24px 24px 4px 24px;
	background-color: #7c4dff;
	color:#fff;
	box-shadow: 0 8px 14px rgba(124,77,255,.3);
}
.fab .line{
	stroke-width: 2;
}
```
